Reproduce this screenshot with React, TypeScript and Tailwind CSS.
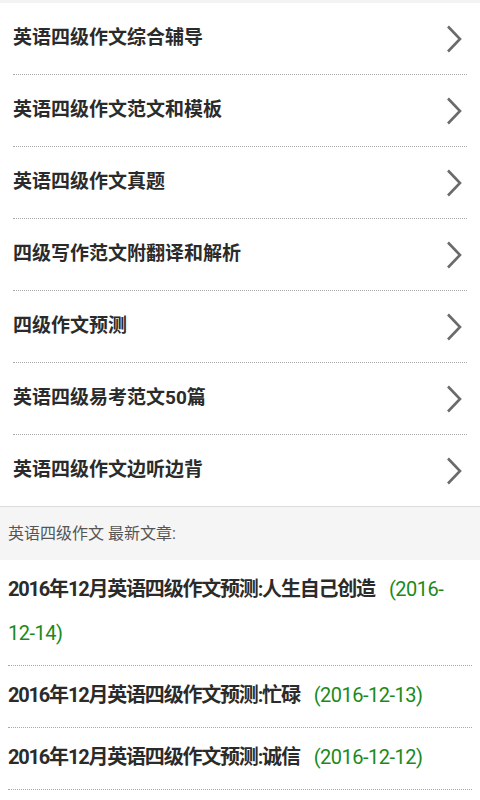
import React from 'react';

const menu = [
  '英语四级作文综合辅导',
  '英语四级作文范文和模板',
  '英语四级作文真题',
  '四级写作范文附翻译和解析',
  '四级作文预测',
  '英语四级易考范文50篇',
  '英语四级作文边听边背',
];

const articles = [
  { title: '2016年12月英语四级作文预测:人生自己创造', date: '2016-12-14' },
  { title: '2016年12月英语四级作文预测:忙碌', date: '2016-12-13' },
  { title: '2016年12月英语四级作文预测:诚信', date: '2016-12-12' },
];

function Chevron() {
  return (
    <svg width="16" height="28" viewBox="0 0 16 28" fill="none">
      <polyline points="2,1.5 14,14 2,26.5" stroke="#6b6b6b" strokeWidth="2.6" />
    </svg>
  );
}

export default function App() {
  return (
    <div
      className="w-[480px] min-h-[800px] bg-white"
      style={{ fontFamily: '"Roboto", "Noto Sans CJK SC", sans-serif' }}
    >
      <div className="h-[3px] bg-[#f3f3f3]" />
      <ul className="border-b border-[#dcdcdc]">
        {menu.map((m, i) => (
          <li key={m} className="px-[13px]">
            <div
              className={
                'flex h-[71px] items-center justify-between pr-[5px] ' +
                (i > 0 ? 'border-t border-dotted border-[#a8a8a8] h-[72px]' : '')
              }
            >
              <span className="text-[19px] font-bold text-[#2b2b2b]">{m}</span>
              <Chevron />
            </div>
          </li>
        ))}
      </ul>
      <div className="flex h-[53px] items-center bg-[#f5f5f5] px-2 text-[16px] text-[#555]">
        英语四级作文 最新文章:
      </div>
      <ul className="px-2">
        {articles.map((a) => {
          const [y, ...rest] = a.date.split('-');
          return (
            <li
              key={a.title}
              className="border-b border-dotted border-[#a8a8a8] pt-[7px] pb-[10px] text-[20px] leading-[44px]"
            >
              <span className="font-bold tracking-[-1.2px] text-[#2b2b2b]">{a.title}</span>
              <span className="ml-[14px] tracking-[-0.5px] text-[#1a8a1a]">
                ({y}-<span className="whitespace-nowrap">{rest.join('-')})</span>
              </span>
            </li>
          );
        })}
      </ul>
    </div>
  );
}
